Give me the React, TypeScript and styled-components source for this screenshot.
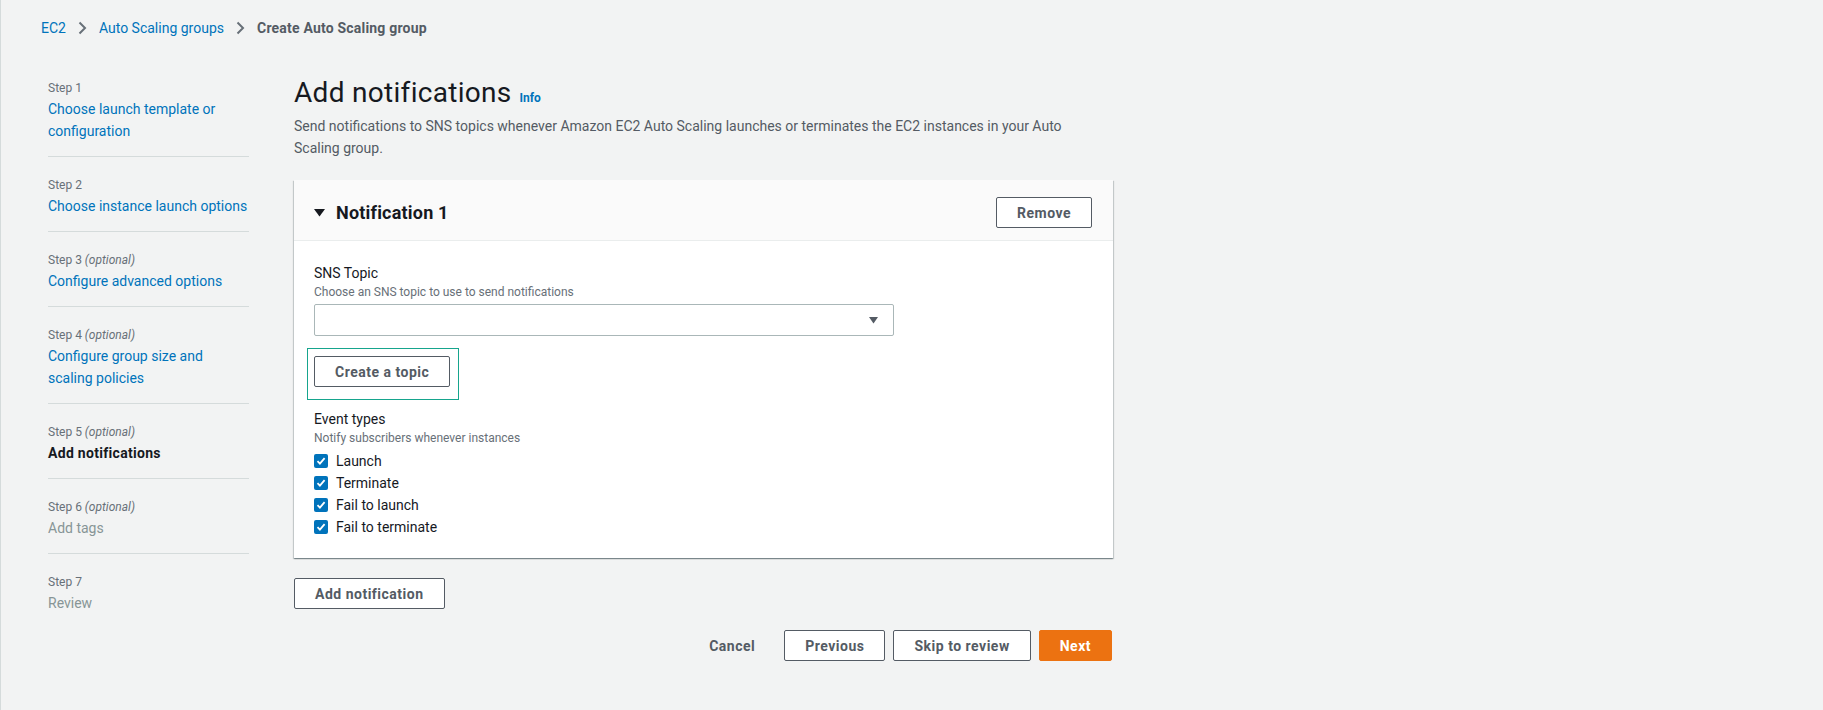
import React from "react";
import styled, { createGlobalStyle } from "styled-components";

const GlobalStyle = createGlobalStyle`
  html, body {
    margin: 0;
    padding: 0;
    background: #f2f3f3;
  }
  body {
    font-family: Roboto, "Liberation Sans", Arial, sans-serif;
    color: #16191f;
    -webkit-font-smoothing: antialiased;
  }
  * { box-sizing: border-box; }
`;

const Page = styled.div`
  min-height: 710px;
  border-left: 1px solid #d5dbdb;
  padding-top: 18px;
`;

const Breadcrumbs = styled.nav`
  display: flex;
  align-items: center;
  padding-left: 40px;
  font-size: 14px;
  line-height: 20px;
  height: 20px;
`;

const Crumb = styled.a<{ $current?: boolean }>`
  color: ${(p) => (p.$current ? "#545b64" : "#0073bb")};
  font-weight: ${(p) => (p.$current ? 700 : 400)};
  letter-spacing: ${(p) => (p.$current ? "0.2px" : "0")};
  text-decoration: none;
`;

const CrumbSep = styled.span`
  display: inline-flex;
  width: 16px;
  height: 16px;
  margin: 0 9px 0 8px;
  color: #687078;
`;

const Layout = styled.div`
  display: flex;
  align-items: flex-start;
  gap: 45px;
  padding-left: 47px;
  margin-top: 37px;
`;

const SideNav = styled.ul`
  list-style: none;
  margin: 0;
  padding: 3px 0 0;
  width: 201px;
  flex: none;
`;

const NavItem = styled.li`
  padding: 18px 0 14px;
  border-top: 1px solid #d5dbdb;
  &:first-child {
    border-top: none;
    padding-top: 0;
  }
`;

const StepLabel = styled.div`
  font-size: 12px;
  line-height: 20px;
  color: #687078;
  em {
    font-style: italic;
  }
`;

const StepTitle = styled.a<{ $state: "link" | "active" | "disabled" }>`
  display: block;
  font-size: 14px;
  line-height: 22px;
  text-decoration: none;
  color: ${(p) =>
    p.$state === "active" ? "#16191f" : p.$state === "disabled" ? "#879596" : "#0073bb"};
  font-weight: ${(p) => (p.$state === "active" ? 700 : 400)};
  letter-spacing: ${(p) => (p.$state === "active" ? "0.3px" : "0")};
`;

const Main = styled.main`
  width: 819px;
  flex: none;
`;

const TitleRow = styled.div`
  display: flex;
  align-items: baseline;
`;

const PageTitle = styled.h1`
  margin: 0;
  font-size: 28px;
  line-height: 36px;
  font-weight: 400;
  letter-spacing: 0.3px;
  color: #16191f;
`;

const InfoLink = styled.a`
  margin-left: 8px;
  font-size: 12px;
  font-weight: 700;
  color: #0073bb;
  text-decoration: none;
`;

const PageDesc = styled.p`
  margin: 4px 0 0;
  max-width: 800px;
  font-size: 14px;
  line-height: 22px;
  color: #545b64;
`;

const Container = styled.section`
  margin-top: 21px;
  background: #fff;
  box-shadow: 0 1px 1px 0 rgba(0, 28, 36, 0.3), 1px 1px 1px 0 rgba(0, 28, 36, 0.15),
    -1px 1px 1px 0 rgba(0, 28, 36, 0.15);
`;

const ContainerHeader = styled.header`
  display: flex;
  align-items: center;
  justify-content: space-between;
  padding: 17px 21px 12px 20px;
  background: #fafafa;
  border-bottom: 1px solid #eaeded;
`;

const HeaderTitle = styled.h2`
  display: flex;
  align-items: center;
  margin: 0;
  font-size: 18px;
  line-height: 22px;
  font-weight: 700;
  letter-spacing: 0.2px;
  color: #16191f;
`;

const Caret = styled.span`
  display: inline-flex;
  width: 11px;
  margin-right: 11px;
  color: #16191f;
`;

const ContainerBody = styled.div`
  padding: 21px 20px 20px;
`;

const FieldLabel = styled.div`
  font-size: 14px;
  line-height: 22px;
  color: #16191f;
`;

const FieldDesc = styled.div`
  font-size: 12px;
  line-height: 16px;
  color: #687078;
`;

const Select = styled.div`
  display: flex;
  align-items: center;
  justify-content: flex-end;
  margin-top: 4px;
  width: 580px;
  height: 32px;
  padding-right: 15px;
  background: #fff;
  border: 1px solid #aab7b8;
  border-radius: 2px;
  color: #545b64;
`;

const Highlight = styled.div`
  display: inline-block;
  margin: 12px 0 0 -7px;
  padding: 7px 8px 12px 6px;
  border: 1px solid #16a58d;
`;

const Button = styled.button<{ $variant?: "normal" | "primary" | "link" }>`
  display: inline-flex;
  align-items: center;
  justify-content: center;
  height: 31px;
  padding: 0 20px;
  font-family: inherit;
  font-size: 14px;
  font-weight: 700;
  line-height: 20px;
  letter-spacing: 0.5px;
  border-radius: 2px;
  cursor: pointer;
  border: 1px solid
    ${(p) => (p.$variant === "primary" ? "#ec7211" : p.$variant === "link" ? "transparent" : "#545b64")};
  background: ${(p) =>
    p.$variant === "primary" ? "#ec7211" : p.$variant === "link" ? "transparent" : "#fff"};
  color: ${(p) => (p.$variant === "primary" ? "#fff" : "#545b64")};
`;

const EventGroup = styled.div`
  margin-top: 8px;
`;

const CheckList = styled.div`
  margin-top: 4px;
`;

const CheckRow = styled.label`
  display: flex;
  align-items: center;
  gap: 8px;
  font-size: 14px;
  line-height: 22px;
  color: #16191f;
`;

const CheckBox = styled.span`
  display: inline-flex;
  align-items: center;
  justify-content: center;
  width: 14px;
  height: 14px;
  border-radius: 2px;
  background: #0073bb;
`;

const AddRow = styled.div`
  margin-top: 20px;
`;

const Footer = styled.div`
  display: flex;
  justify-content: flex-end;
  gap: 8px;
  margin-top: 21px;
  padding-right: 1px;
`;

const Chevron = () => (
  <svg width="16" height="16" viewBox="0 0 16 16" fill="none">
    <path d="M5.5 2.5l5.5 5.5-5.5 5.5" stroke="currentColor" strokeWidth="2" />
  </svg>
);

const Check = () => (
  <svg width="10" height="10" viewBox="0 0 10 10" fill="none">
    <path d="M1.5 5.2l2.4 2.4L8.6 2.2" stroke="#fff" strokeWidth="1.8" />
  </svg>
);

const steps: { label: string; optional?: boolean; title: string[]; state: "link" | "active" | "disabled" }[] = [
  { label: "Step 1", title: ["Choose launch template or", "configuration"], state: "link" },
  { label: "Step 2", title: ["Choose instance launch options"], state: "link" },
  { label: "Step 3", optional: true, title: ["Configure advanced options"], state: "link" },
  { label: "Step 4", optional: true, title: ["Configure group size and", "scaling policies"], state: "link" },
  { label: "Step 5", optional: true, title: ["Add notifications"], state: "active" },
  { label: "Step 6", optional: true, title: ["Add tags"], state: "disabled" },
  { label: "Step 7", title: ["Review"], state: "disabled" },
];

const events = ["Launch", "Terminate", "Fail to launch", "Fail to terminate"];

export default function App() {
  return (
    <>
      <GlobalStyle />
      <Page>
        <Breadcrumbs>
          <Crumb href="#">EC2</Crumb>
          <CrumbSep>
            <Chevron />
          </CrumbSep>
          <Crumb href="#">Auto Scaling groups</Crumb>
          <CrumbSep>
            <Chevron />
          </CrumbSep>
          <Crumb $current>Create Auto Scaling group</Crumb>
        </Breadcrumbs>
        <Layout>
          <SideNav>
            {steps.map((s) => (
              <NavItem key={s.label}>
                <StepLabel>
                  {s.label}
                  {s.optional && (
                    <>
                      {" "}
                      <em>(optional)</em>
                    </>
                  )}
                </StepLabel>
                <StepTitle $state={s.state}>
                  {s.title.map((t, i) => (
                    <React.Fragment key={t}>
                      {i > 0 && <br />}
                      {t}
                    </React.Fragment>
                  ))}
                </StepTitle>
              </NavItem>
            ))}
          </SideNav>
          <Main>
            <TitleRow>
              <PageTitle>Add notifications</PageTitle>
              <InfoLink href="#">Info</InfoLink>
            </TitleRow>
            <PageDesc>
              Send notifications to SNS topics whenever Amazon EC2 Auto Scaling launches or terminates the EC2
              instances in your Auto Scaling group.
            </PageDesc>
            <Container>
              <ContainerHeader>
                <HeaderTitle>
                  <Caret>
                    <svg width="11" height="8" viewBox="0 0 11 8">
                      <path d="M0 0h11L5.5 7.5z" fill="currentColor" />
                    </svg>
                  </Caret>
                  Notification 1
                </HeaderTitle>
                <Button>Remove</Button>
              </ContainerHeader>
              <ContainerBody>
                <FieldLabel>SNS Topic</FieldLabel>
                <FieldDesc>Choose an SNS topic to use to send notifications</FieldDesc>
                <Select>
                  <svg width="9" height="7" viewBox="0 0 9 7">
                    <path d="M0 0h9L4.5 6.5z" fill="currentColor" />
                  </svg>
                </Select>
                <Highlight>
                  <Button>Create a topic</Button>
                </Highlight>
                <EventGroup>
                  <FieldLabel>Event types</FieldLabel>
                  <FieldDesc>Notify subscribers whenever instances</FieldDesc>
                  <CheckList>
                    {events.map((e) => (
                      <CheckRow key={e}>
                        <CheckBox>
                          <Check />
                        </CheckBox>
                        {e}
                      </CheckRow>
                    ))}
                  </CheckList>
                </EventGroup>
              </ContainerBody>
            </Container>
            <AddRow>
              <Button>Add notification</Button>
            </AddRow>
            <Footer>
              <Button $variant="link">Cancel</Button>
              <Button>Previous</Button>
              <Button>Skip to review</Button>
              <Button $variant="primary">Next</Button>
            </Footer>
          </Main>
        </Layout>
      </Page>
    </>
  );
}
